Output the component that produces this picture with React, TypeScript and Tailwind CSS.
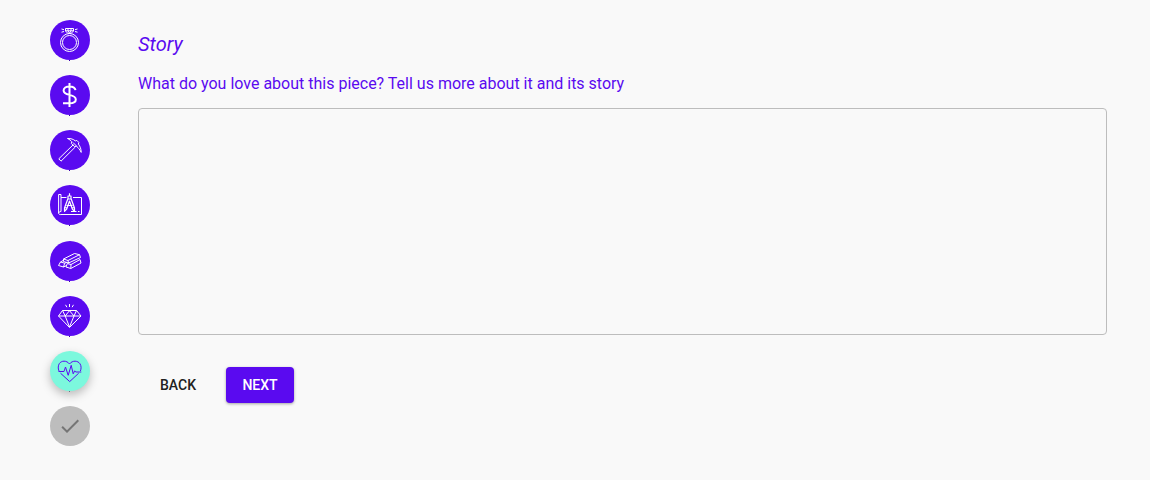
import React from 'react';

const icons = {
  ring: (
    <>
      <circle cx="11.5" cy="14.5" r="9" />
      <circle cx="11.5" cy="14.5" r="7" />
      <path d="M7.5 .5h8V3L13 5.5h-3L7.5 3zM7.5 2.8h8M10 .5v2.3l1.500 2.500L13 2.800V.5M3.500 1l2.500.7M3.500 4.200L6 3.500M19.500 1l-2.500.7M19.500 4.200L17 3.500" />
    </>
  ),
  dollar: (
    <path
      strokeWidth="2"
      d="M11.5 0v24M17.5 7.2C17.200 4.800 15 3.400 11.500 3.400S5.600 5 5.600 7.500c0 2.800 2.500 3.600 5.900 4.400 3.600.8 6.300 1.700 6.300 4.500 0 2.500-2.500 3.800-6.300 3.800H5"
    />
  ),
  pickaxe: (
    <path d="M9.5 .5c3.500-.2 6 .8 7.800 2.400l1.500-.5 2 2-.4 1.700c1.800 2.400 2.700 4.700 2.800 8.300-1.400-3-3-4.700-4.800-6.100l-2 .2-3-3 .4-1.800C12.800 2.500 11.500 1.500 9.500 .5zM15.300 6.700L.8 20.800l2.200 2.400L17.300 9M15 4.500l4 4" />
  ),
  blueprint: (
    <>
      <path d="M8.500 4.500H3M15 4.500h8.500v17H2.800M3 18.500v-17H.6v18.700c0 .9.800 1.400 2.200 1.400M3 18.500c-1.300 0-2.300.6-2.300 1.700M13 18.500h5.500M20 18.500h1.500" />
      <path
        strokeWidth="1.2"
        d="M11.500.2v2.200M10 3h3v3h-3zM10 5.500L6.500 15v3.300L8.700 16l2.800-8 2.800 8 2.200 2.300V15L13 5.500M8.500 12.500h6M7 14.500l2 .8M16 14.500l-2 .8"
      />
    </>
  ),
  ingots: (
    <>
      <path d="M5.500 10l11-5.500 5 1.200 1 2.800L10.500 14l-5-1.500zM5.500 10l4.500 1.500L21.500 5.700M10 11.500l.5 2.500" />
      <path d="M5 11.500L2.500 13 .5 16.500l5 1.500 3-1.500M2.500 13l4.200 1.200L5.500 18M6.700 14.200l2.300-1M9.300 14.500l-1.300 3.500 4.800 1.500L23 14l-1-3.500L13 15.500l-.2 4M9.300 14.500l3.700 1" />
    </>
  ),
  diamond: (
    <path d="M4.500 6.500h14L23 12 11.500 23.500.5 12zM.5 12H23M4.500 6.500L7.200 12l4.300-5.300L16 12l2.500-5.500M7.200 12l4.300 11L16 12M11.500 0v3M7.500 .8l1.400 2.400M15.500 .8l-1.400 2.400" />
  ),
  heart: (
    <>
      <path d="M1 12C-.2 9.500.1 6.500 1.300 4.600 3.300 1.600 8.500 1 11.500 5c3-4 8.500-3.400 10.500-.2 1.300 2 1.400 4.800.4 7.200M2.500 14.200l9.200 8.400 9-8.400" />
      <path d="M.5 12.500H6l1.500-4.500 2.700 8.300 3-10 2 8.500 1.500-3 1 1.200h5.600" />
    </>
  ),
};

const steps: { label: string; icon: React.ReactNode; active?: boolean }[] = [
  { label: 'Ring', icon: icons.ring },
  { label: 'Price', icon: icons.dollar },
  { label: 'Craft', icon: icons.pickaxe },
  { label: 'Design', icon: icons.blueprint },
  { label: 'Metal', icon: icons.ingots },
  { label: 'Stones', icon: icons.diamond },
  { label: 'Story', icon: icons.heart, active: true },
];

const Stepper: React.FC = () => {
  return (
    <ol className="flex min-h-[426px] flex-col justify-between self-start">
      {steps.map(step => (
        <li key={step.label} aria-current={step.active ? 'step' : undefined}>
          <div
            className={
              step.active
                ? 'flex h-10 w-10 items-center justify-center rounded-full bg-[#7cf8dd] text-[#5a0af0] shadow-[0_4px_10px_0_rgba(0,0,0,0.25)]'
                : 'flex h-10 w-10 items-center justify-center rounded-full bg-[#5a0af0] text-white'
            }
          >
            <svg
              role="img"
              aria-label={step.label}
              className="h-6 w-6 overflow-visible"
              viewBox="0 0 24 24"
              fill="none"
              stroke="currentColor"
              strokeWidth="1"
              strokeLinejoin="round"
            >
              {step.icon}
            </svg>
          </div>
          <div className={step.active ? 'ml-[19px] h-px w-px bg-gray-500' : 'ml-[19px] h-px w-px bg-[#3a00b0]'}></div>
        </li>
      ))}
      <li className="flex h-10 w-10 items-center justify-center rounded-full bg-[#bdbdbd] text-[#757575]">
        <svg role="img" aria-label="Finish" className="h-6 w-6" viewBox="0 0 24 24" fill="currentColor">
          <path d="M9 16.2L4.8 12l-1.4 1.4L9 19 21 7l-1.4-1.4z" />
        </svg>
      </li>
    </ol>
  );
};

const App: React.FC = () => {
  return (
    <div className="flex min-h-screen bg-[#f9f9f9] pt-5 pr-[43px] pl-[50px] font-[Roboto,sans-serif]">
      <Stepper />
      <main className="ml-12 flex-1 pt-2">
        <h1 className="text-xl leading-8 italic text-[#5a0af0]">Story</h1>
        <label htmlFor="story" className="mt-3 block text-base leading-6 text-[#5a0af0]">
          What do you love about this piece? Tell us more about it and its story
        </label>
        <textarea
          id="story"
          className="mt-3 block h-[227px] w-full resize-none rounded border border-[#bdbdbd] bg-transparent p-3 text-base outline-none"
        />
        <div className="mt-8 flex gap-2">
          <button type="button" className="h-9 w-20 rounded text-sm font-medium text-[#212121]">
            BACK
          </button>
          <button
            type="button"
            className="h-9 w-[68px] rounded bg-[#5a0af0] text-sm font-medium text-white shadow-[0_1px_3px_0_rgba(0,0,0,0.35)]"
          >
            NEXT
          </button>
        </div>
      </main>
    </div>
  );
};

export default App;
